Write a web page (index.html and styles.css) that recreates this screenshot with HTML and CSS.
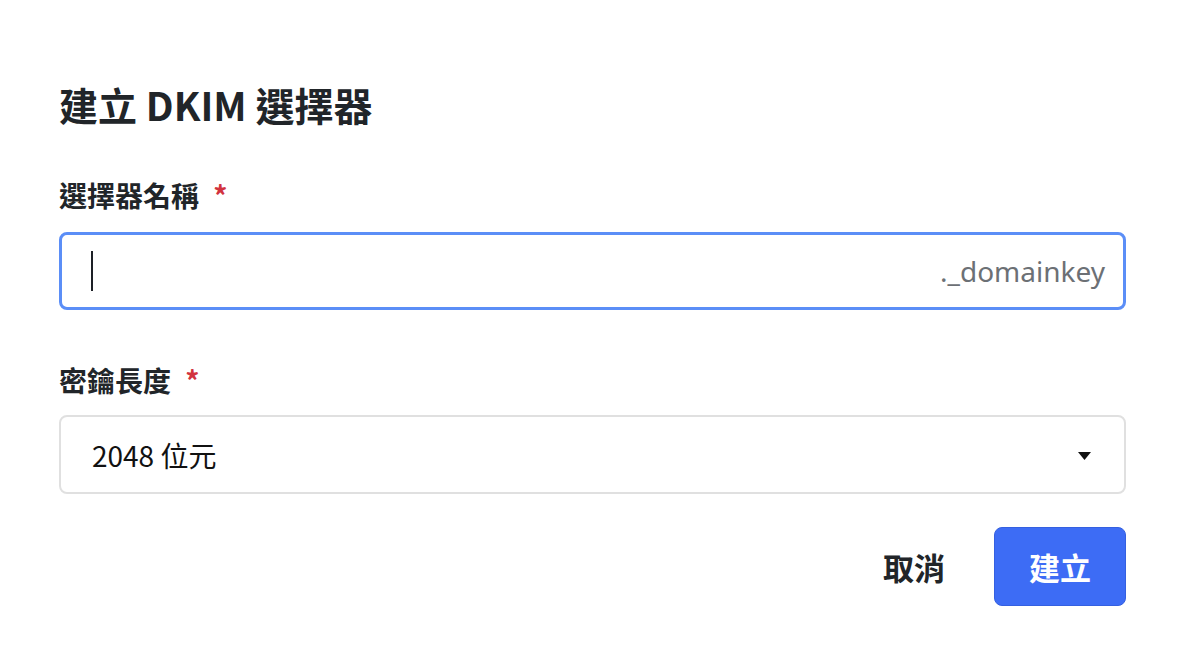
FILE: index.html
```html
<!DOCTYPE html>
<html lang="zh-Hant">
<head>
<meta charset="utf-8">
<title>建立 DKIM 選擇器</title>
<link rel="stylesheet" href="styles.css">
</head>
<body>
<div class="dialog">
  <h1 class="title">建立 DKIM 選擇器</h1>

  <div class="label label-first">選擇器名稱 <span class="req">*</span></div>
  <div class="field field-focus">
    <span class="caret"></span>
    <span class="spacer"></span>
    <span class="suffix">._domainkey</span>
  </div>

  <div class="label label-second">密鑰長度 <span class="req">*</span></div>
  <div class="field field-select">
    <span class="select-value">2048 位元</span>
    <span class="spacer"></span>
    <svg class="arrow" width="13" height="8" viewBox="0 0 13 8"><path d="M0 0 L13 0 L6.5 8 Z" fill="#111"/></svg>
  </div>

  <div class="actions">
    <button class="btn btn-cancel">取消</button>
    <button class="btn btn-primary">建立</button>
  </div>
</div>
</body>
</html>
```

FILE: styles.css
```css
html, body {
  margin: 0;
  padding: 0;
  background: #ffffff;
}

body {
  font-family: "Noto Sans CJK TC", "Noto Sans", sans-serif;
  color: #212529;
}

.dialog {
  padding: 80px 58px 0 59px;
}

.title {
  margin: 0;
  font-size: 39px;
  line-height: 48px;
  font-weight: 700;
  color: #212529;
}

.label {
  font-size: 28px;
  line-height: 40px;
  font-weight: 700;
  color: #212529;
}

.label-first {
  margin-top: 47px;
}

.label-second {
  margin-top: 50px;
}

.req {
  color: #d2333f;
  margin-left: 8px;
}

.field {
  display: flex;
  align-items: center;
  box-sizing: border-box;
  background: #fff;
}

.field-focus {
  margin-top: 17px;
  height: 78px;
  border: 3px solid #5b8ef7;
  border-radius: 8px;
  padding: 0 18px 0 29px;
}

.caret {
  display: block;
  width: 2px;
  height: 40px;
  background: #1d2026;
}

.spacer {
  flex: 1;
}

.suffix {
  font-family: "Noto Sans", sans-serif;
  font-size: 28px;
  color: #6c7075;
}

.field-select {
  margin-top: 15px;
  height: 79px;
  border: 2px solid #e0e0e0;
  border-radius: 8px;
  padding: 0 33px 0 31px;
}

.select-value {
  font-size: 28px;
  color: #111;
}

.arrow {
  display: block;
  margin-top: 3px;
}

.actions {
  margin-top: 33px;
  display: flex;
  justify-content: flex-end;
  align-items: center;
  gap: 49px;
}

.btn {
  font-family: "Noto Sans CJK TC", sans-serif;
  font-weight: 700;
  border: none;
  background: none;
  padding: 0;
  cursor: pointer;
}

.btn-cancel {
  font-size: 31px;
  color: #212529;
}

.btn-primary {
  width: 132px;
  height: 79px;
  border-radius: 8px;
  background: #3d6cf5;
  border: 1px solid #3560e0;
  color: #fff;
  font-size: 31px;
}
```
